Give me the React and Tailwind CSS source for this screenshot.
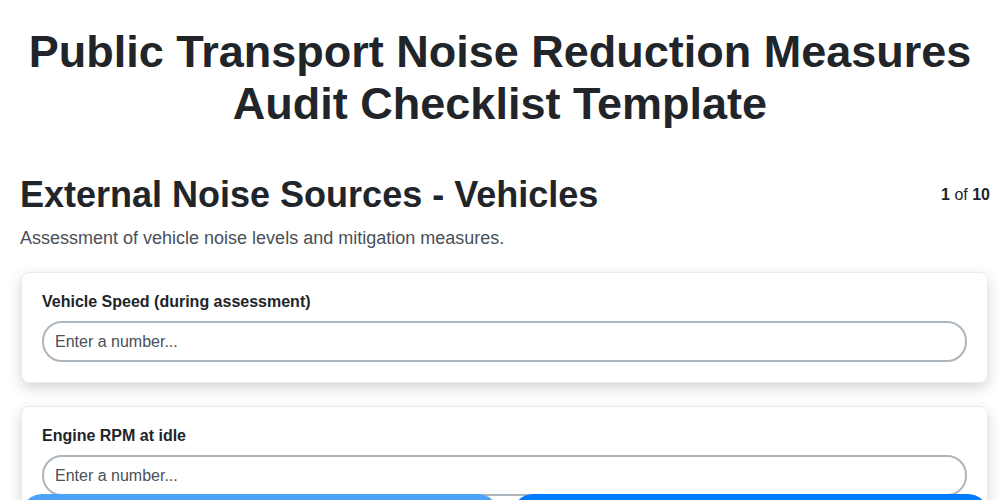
export default function App() {
  const fields = [
    { label: "Vehicle Speed (during assessment)" },
    { label: "Engine RPM at idle" },
    { label: "Exhaust Noise Level (dB)" },
  ];

  return (
    <div className="h-screen overflow-hidden bg-white text-[#212529] font-['Liberation_Sans',Arial,sans-serif]">
      <h1 className="text-center text-[45px] leading-[52px] font-bold px-5 pt-[26px]">
        Public Transport Noise Reduction Measures Audit Checklist Template
      </h1>

      <div className="pl-5 pr-[10px] pt-[43px]">
        <div className="flex items-start justify-between">
          <h2 className="text-[36px] leading-[44px] font-bold">External Noise Sources - Vehicles</h2>
          <div className="text-[16px] pt-[10px]">
            <span className="font-bold">1</span> of <span className="font-bold">10</span>
          </div>
        </div>
        <p className="mt-[7px] text-[18px] leading-[28px] text-[#495057]">
          Assessment of vehicle noise levels and mitigation measures.
        </p>

        <div className="mt-[20px] flex flex-col gap-[23px] pb-24">
          {fields.map((f) => (
            <div
              key={f.label}
              className="ml-px mr-[2px] rounded-lg border border-[#e9ecef] bg-white px-[20px] pt-[20px] pb-[20px] shadow-[0_5px_14px_rgba(0,0,0,0.17)]"
            >
              <label className="block text-[16px] font-bold leading-[18px]">{f.label}</label>
              <input
                type="text"
                placeholder="Enter a number..."
                className="mt-[10px] block w-full h-[41px] rounded-[20px] border-2 border-[#adb5bd] px-[11px] text-[16px] text-[#212529] placeholder:text-[#495057] outline-none"
              />
            </div>
          ))}
        </div>
      </div>

      <div className="fixed left-0 right-0 top-[494px] flex gap-[15px] pl-[22px] pr-[12px]">
        <button className="flex-1 h-[64px] rounded-[20px] bg-[#4da3f7] text-white font-bold">
          Previous
        </button>
        <button className="flex-1 h-[64px] rounded-[20px] bg-[#007bff] text-white font-bold">
          Next
        </button>
      </div>
    </div>
  );
}
